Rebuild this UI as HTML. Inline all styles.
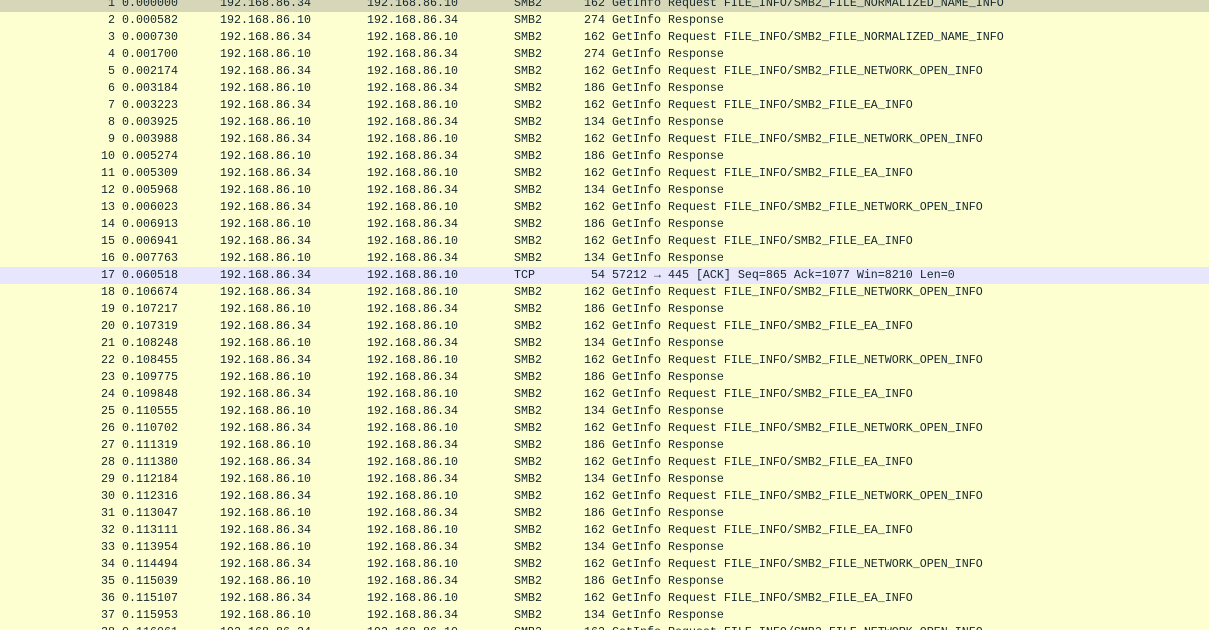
<!DOCTYPE html>
<html><head><meta charset="utf-8"><style>
html,body{margin:0;padding:0;width:1209px;height:630px;overflow:hidden;background:#feffd0;}
.w{position:relative;margin-top:-5px;}
.r{position:relative;width:1209px;height:17px;line-height:17px;background:#feffd0;font-family:"Liberation Mono",monospace;font-size:11.67px;color:#12272e;white-space:pre;}
.r span{position:absolute;top:0}
.n{right:1094px;text-align:right}
.t{left:122px}.s{left:220px}.d{left:367px}.p{left:514px}
.l{right:604px;text-align:right}.i{left:612px}
.sel{background:#d6d6b8}
.tcp{background:#e7e6fc}
</style></head><body>
<div class="w">
<div class="r sel"><span class="n">1</span><span class="t">0.000000</span><span class="s">192.168.86.34</span><span class="d">192.168.86.10</span><span class="p">SMB2</span><span class="l">162</span><span class="i">GetInfo Request FILE_INFO/SMB2_FILE_NORMALIZED_NAME_INFO</span></div>
<div class="r"><span class="n">2</span><span class="t">0.000582</span><span class="s">192.168.86.10</span><span class="d">192.168.86.34</span><span class="p">SMB2</span><span class="l">274</span><span class="i">GetInfo Response</span></div>
<div class="r"><span class="n">3</span><span class="t">0.000730</span><span class="s">192.168.86.34</span><span class="d">192.168.86.10</span><span class="p">SMB2</span><span class="l">162</span><span class="i">GetInfo Request FILE_INFO/SMB2_FILE_NORMALIZED_NAME_INFO</span></div>
<div class="r"><span class="n">4</span><span class="t">0.001700</span><span class="s">192.168.86.10</span><span class="d">192.168.86.34</span><span class="p">SMB2</span><span class="l">274</span><span class="i">GetInfo Response</span></div>
<div class="r"><span class="n">5</span><span class="t">0.002174</span><span class="s">192.168.86.34</span><span class="d">192.168.86.10</span><span class="p">SMB2</span><span class="l">162</span><span class="i">GetInfo Request FILE_INFO/SMB2_FILE_NETWORK_OPEN_INFO</span></div>
<div class="r"><span class="n">6</span><span class="t">0.003184</span><span class="s">192.168.86.10</span><span class="d">192.168.86.34</span><span class="p">SMB2</span><span class="l">186</span><span class="i">GetInfo Response</span></div>
<div class="r"><span class="n">7</span><span class="t">0.003223</span><span class="s">192.168.86.34</span><span class="d">192.168.86.10</span><span class="p">SMB2</span><span class="l">162</span><span class="i">GetInfo Request FILE_INFO/SMB2_FILE_EA_INFO</span></div>
<div class="r"><span class="n">8</span><span class="t">0.003925</span><span class="s">192.168.86.10</span><span class="d">192.168.86.34</span><span class="p">SMB2</span><span class="l">134</span><span class="i">GetInfo Response</span></div>
<div class="r"><span class="n">9</span><span class="t">0.003988</span><span class="s">192.168.86.34</span><span class="d">192.168.86.10</span><span class="p">SMB2</span><span class="l">162</span><span class="i">GetInfo Request FILE_INFO/SMB2_FILE_NETWORK_OPEN_INFO</span></div>
<div class="r"><span class="n">10</span><span class="t">0.005274</span><span class="s">192.168.86.10</span><span class="d">192.168.86.34</span><span class="p">SMB2</span><span class="l">186</span><span class="i">GetInfo Response</span></div>
<div class="r"><span class="n">11</span><span class="t">0.005309</span><span class="s">192.168.86.34</span><span class="d">192.168.86.10</span><span class="p">SMB2</span><span class="l">162</span><span class="i">GetInfo Request FILE_INFO/SMB2_FILE_EA_INFO</span></div>
<div class="r"><span class="n">12</span><span class="t">0.005968</span><span class="s">192.168.86.10</span><span class="d">192.168.86.34</span><span class="p">SMB2</span><span class="l">134</span><span class="i">GetInfo Response</span></div>
<div class="r"><span class="n">13</span><span class="t">0.006023</span><span class="s">192.168.86.34</span><span class="d">192.168.86.10</span><span class="p">SMB2</span><span class="l">162</span><span class="i">GetInfo Request FILE_INFO/SMB2_FILE_NETWORK_OPEN_INFO</span></div>
<div class="r"><span class="n">14</span><span class="t">0.006913</span><span class="s">192.168.86.10</span><span class="d">192.168.86.34</span><span class="p">SMB2</span><span class="l">186</span><span class="i">GetInfo Response</span></div>
<div class="r"><span class="n">15</span><span class="t">0.006941</span><span class="s">192.168.86.34</span><span class="d">192.168.86.10</span><span class="p">SMB2</span><span class="l">162</span><span class="i">GetInfo Request FILE_INFO/SMB2_FILE_EA_INFO</span></div>
<div class="r"><span class="n">16</span><span class="t">0.007763</span><span class="s">192.168.86.10</span><span class="d">192.168.86.34</span><span class="p">SMB2</span><span class="l">134</span><span class="i">GetInfo Response</span></div>
<div class="r tcp"><span class="n">17</span><span class="t">0.060518</span><span class="s">192.168.86.34</span><span class="d">192.168.86.10</span><span class="p">TCP</span><span class="l">54</span><span class="i">57212 → 445 [ACK] Seq=865 Ack=1077 Win=8210 Len=0</span></div>
<div class="r"><span class="n">18</span><span class="t">0.106674</span><span class="s">192.168.86.34</span><span class="d">192.168.86.10</span><span class="p">SMB2</span><span class="l">162</span><span class="i">GetInfo Request FILE_INFO/SMB2_FILE_NETWORK_OPEN_INFO</span></div>
<div class="r"><span class="n">19</span><span class="t">0.107217</span><span class="s">192.168.86.10</span><span class="d">192.168.86.34</span><span class="p">SMB2</span><span class="l">186</span><span class="i">GetInfo Response</span></div>
<div class="r"><span class="n">20</span><span class="t">0.107319</span><span class="s">192.168.86.34</span><span class="d">192.168.86.10</span><span class="p">SMB2</span><span class="l">162</span><span class="i">GetInfo Request FILE_INFO/SMB2_FILE_EA_INFO</span></div>
<div class="r"><span class="n">21</span><span class="t">0.108248</span><span class="s">192.168.86.10</span><span class="d">192.168.86.34</span><span class="p">SMB2</span><span class="l">134</span><span class="i">GetInfo Response</span></div>
<div class="r"><span class="n">22</span><span class="t">0.108455</span><span class="s">192.168.86.34</span><span class="d">192.168.86.10</span><span class="p">SMB2</span><span class="l">162</span><span class="i">GetInfo Request FILE_INFO/SMB2_FILE_NETWORK_OPEN_INFO</span></div>
<div class="r"><span class="n">23</span><span class="t">0.109775</span><span class="s">192.168.86.10</span><span class="d">192.168.86.34</span><span class="p">SMB2</span><span class="l">186</span><span class="i">GetInfo Response</span></div>
<div class="r"><span class="n">24</span><span class="t">0.109848</span><span class="s">192.168.86.34</span><span class="d">192.168.86.10</span><span class="p">SMB2</span><span class="l">162</span><span class="i">GetInfo Request FILE_INFO/SMB2_FILE_EA_INFO</span></div>
<div class="r"><span class="n">25</span><span class="t">0.110555</span><span class="s">192.168.86.10</span><span class="d">192.168.86.34</span><span class="p">SMB2</span><span class="l">134</span><span class="i">GetInfo Response</span></div>
<div class="r"><span class="n">26</span><span class="t">0.110702</span><span class="s">192.168.86.34</span><span class="d">192.168.86.10</span><span class="p">SMB2</span><span class="l">162</span><span class="i">GetInfo Request FILE_INFO/SMB2_FILE_NETWORK_OPEN_INFO</span></div>
<div class="r"><span class="n">27</span><span class="t">0.111319</span><span class="s">192.168.86.10</span><span class="d">192.168.86.34</span><span class="p">SMB2</span><span class="l">186</span><span class="i">GetInfo Response</span></div>
<div class="r"><span class="n">28</span><span class="t">0.111380</span><span class="s">192.168.86.34</span><span class="d">192.168.86.10</span><span class="p">SMB2</span><span class="l">162</span><span class="i">GetInfo Request FILE_INFO/SMB2_FILE_EA_INFO</span></div>
<div class="r"><span class="n">29</span><span class="t">0.112184</span><span class="s">192.168.86.10</span><span class="d">192.168.86.34</span><span class="p">SMB2</span><span class="l">134</span><span class="i">GetInfo Response</span></div>
<div class="r"><span class="n">30</span><span class="t">0.112316</span><span class="s">192.168.86.34</span><span class="d">192.168.86.10</span><span class="p">SMB2</span><span class="l">162</span><span class="i">GetInfo Request FILE_INFO/SMB2_FILE_NETWORK_OPEN_INFO</span></div>
<div class="r"><span class="n">31</span><span class="t">0.113047</span><span class="s">192.168.86.10</span><span class="d">192.168.86.34</span><span class="p">SMB2</span><span class="l">186</span><span class="i">GetInfo Response</span></div>
<div class="r"><span class="n">32</span><span class="t">0.113111</span><span class="s">192.168.86.34</span><span class="d">192.168.86.10</span><span class="p">SMB2</span><span class="l">162</span><span class="i">GetInfo Request FILE_INFO/SMB2_FILE_EA_INFO</span></div>
<div class="r"><span class="n">33</span><span class="t">0.113954</span><span class="s">192.168.86.10</span><span class="d">192.168.86.34</span><span class="p">SMB2</span><span class="l">134</span><span class="i">GetInfo Response</span></div>
<div class="r"><span class="n">34</span><span class="t">0.114494</span><span class="s">192.168.86.34</span><span class="d">192.168.86.10</span><span class="p">SMB2</span><span class="l">162</span><span class="i">GetInfo Request FILE_INFO/SMB2_FILE_NETWORK_OPEN_INFO</span></div>
<div class="r"><span class="n">35</span><span class="t">0.115039</span><span class="s">192.168.86.10</span><span class="d">192.168.86.34</span><span class="p">SMB2</span><span class="l">186</span><span class="i">GetInfo Response</span></div>
<div class="r"><span class="n">36</span><span class="t">0.115107</span><span class="s">192.168.86.34</span><span class="d">192.168.86.10</span><span class="p">SMB2</span><span class="l">162</span><span class="i">GetInfo Request FILE_INFO/SMB2_FILE_EA_INFO</span></div>
<div class="r"><span class="n">37</span><span class="t">0.115953</span><span class="s">192.168.86.10</span><span class="d">192.168.86.34</span><span class="p">SMB2</span><span class="l">134</span><span class="i">GetInfo Response</span></div>
<div class="r"><span class="n">38</span><span class="t">0.116061</span><span class="s">192.168.86.34</span><span class="d">192.168.86.10</span><span class="p">SMB2</span><span class="l">162</span><span class="i">GetInfo Request FILE_INFO/SMB2_FILE_NETWORK_OPEN_INFO</span></div>
</div>
</body></html>
